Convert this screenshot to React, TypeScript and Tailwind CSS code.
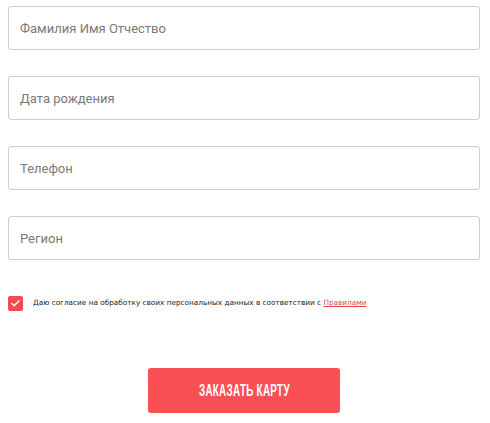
import { Check } from "lucide-react";

const fields = ["Фамилия Имя Отчество", "Дата рождения", "Телефон", "Регион"];

export default function App() {
  return (
    <div className="w-[490px] h-[423px] bg-white pl-2 pr-[10px] pt-[6px]" style={{ fontFamily: "Roboto, sans-serif" }}>
      <div className="flex flex-col gap-[26px]">
        {fields.map((f) => (
          <input
            key={f}
            placeholder={f}
            className="h-[44px] w-full rounded-[3px] border border-[#cccccc] px-[11px] text-[13px] text-[#333] placeholder:text-[#7a7a7a] outline-none"
          />
        ))}
      </div>

      <label className="mt-[36px] flex items-center gap-[10px]">
        <span className="flex h-[15px] w-[15px] items-center justify-center rounded-[2px] bg-[#f04c52]">
          <Check className="h-[11px] w-[11px] text-white" strokeWidth={3} />
        </span>
        <span className="text-[7.3px] text-[#222]" style={{ fontFamily: "'DejaVu Sans', sans-serif" }}>
          Даю согласие на обработку своих персональных данных в соответствии с{" "}
          <a href="#" className="text-[#e0484e] underline">Правилами</a>
        </span>
      </label>

      <div className="mt-[57px] flex justify-center">
        <button
          className="h-[45px] w-[192px] rounded-[3px] bg-[#fa4f55] text-white"
          style={{ fontFamily: "'Liberation Sans', sans-serif" }}
        >
          <span className="inline-block scale-x-[0.58] text-[17px] font-bold uppercase tracking-[0.5px]">Заказать карту</span>
        </button>
      </div>
    </div>
  );
}
